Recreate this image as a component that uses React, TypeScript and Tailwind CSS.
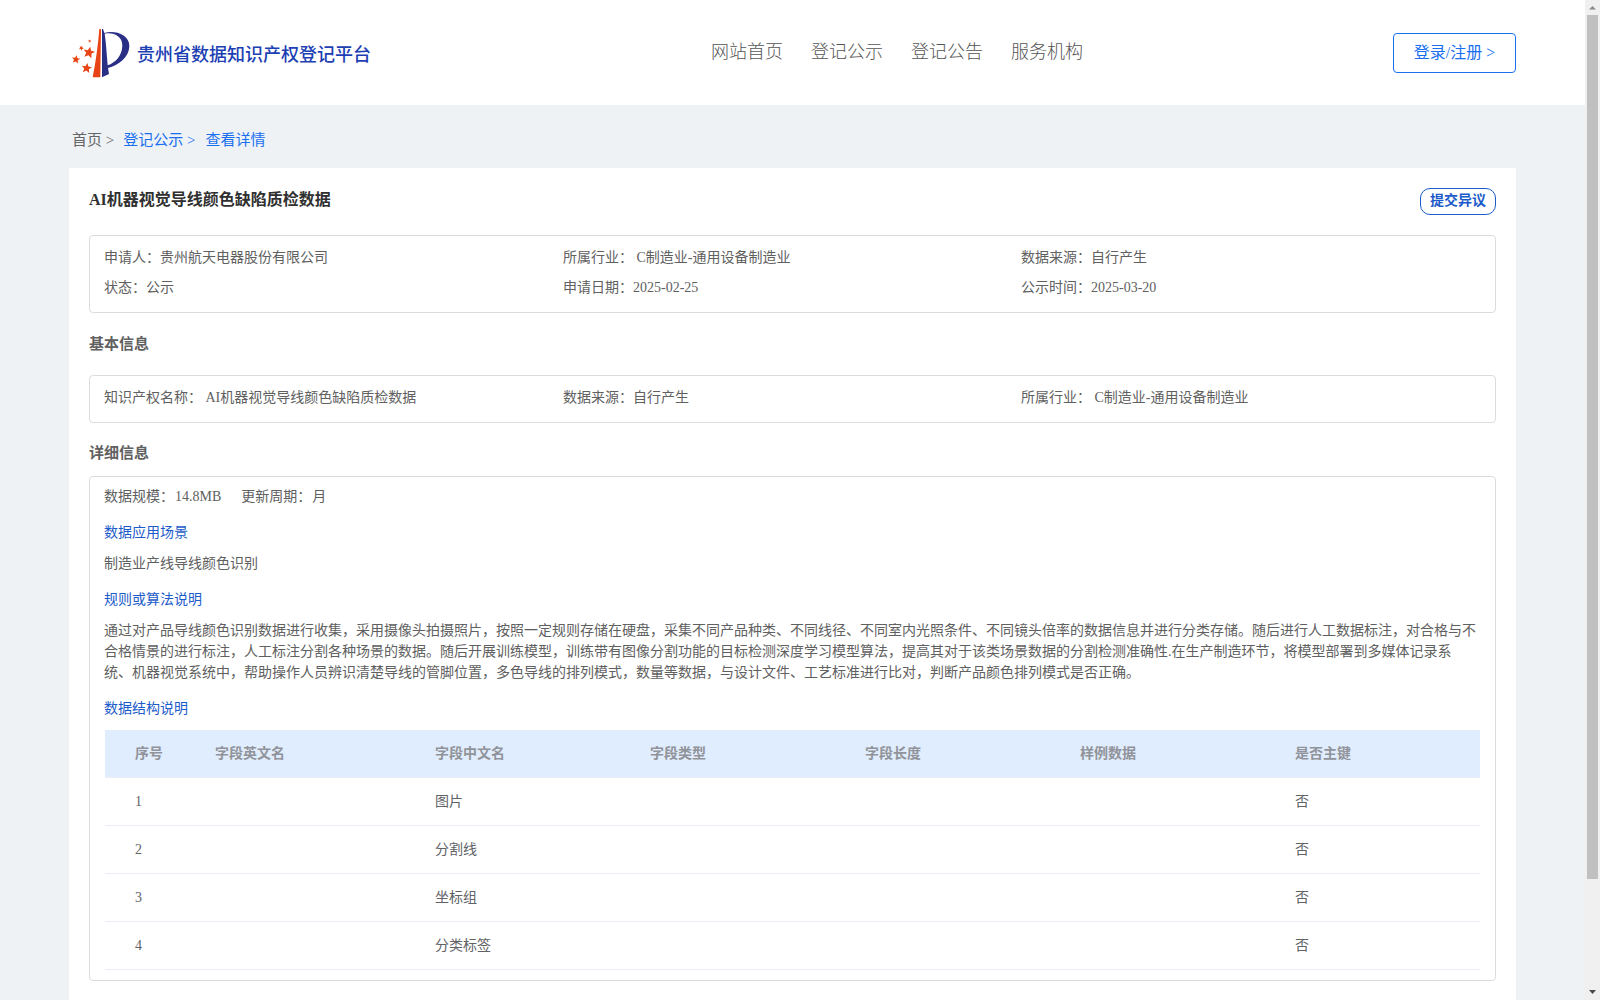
import React from 'react';

interface Field {
  label: string;
  value: string;
}

interface Column {
  title: string;
  key: 'index' | 'nameEn' | 'nameCn' | 'type' | 'length' | 'sample' | 'primary';
}

type Row = Partial<Record<Column['key'], string>>;

const navItems = ['网站首页', '登记公示', '登记公告', '服务机构'];

const summary: Field[] = [
  { label: '申请人：', value: '贵州航天电器股份有限公司' },
  { label: '所属行业：', value: ' C制造业-通用设备制造业' },
  { label: '数据来源：', value: '自行产生' },
  { label: '状态：', value: '公示' },
  { label: '申请日期：', value: '2025-02-25' },
  { label: '公示时间：', value: '2025-03-20' },
];

const basicInfo: Field[] = [
  { label: '知识产权名称：', value: ' AI机器视觉导线颜色缺陷质检数据' },
  { label: '数据来源：', value: '自行产生' },
  { label: '所属行业：', value: ' C制造业-通用设备制造业' },
];

const columns: Column[] = [
  { title: '序号', key: 'index' },
  { title: '字段英文名', key: 'nameEn' },
  { title: '字段中文名', key: 'nameCn' },
  { title: '字段类型', key: 'type' },
  { title: '字段长度', key: 'length' },
  { title: '样例数据', key: 'sample' },
  { title: '是否主键', key: 'primary' },
];

const rows: Row[] = [
  { index: '1', nameCn: '图片', primary: '否' },
  { index: '2', nameCn: '分割线', primary: '否' },
  { index: '3', nameCn: '坐标组', primary: '否' },
  { index: '4', nameCn: '分类标签', primary: '否' },
];

// unit star, centred on the origin
const STAR = 'M0-10L2.9-3.2 10-3 4.5 1.6 6.2 9 0 5-6.2 9-4.5 1.6-10-3-2.9-3.2Z';

const Logo: React.FC = () => (
  <svg className="h-[50px] w-[58px]" viewBox="36 39 174 150">
    <g fill="#e84315">
      <path d="M118 42 C114 92 107 142 98 187 H121 L123 42Z" />
      <path d={STAR} transform="translate(87 112) rotate(12) scale(1.75)" />
      <path d={STAR} transform="translate(80 159) rotate(8) scale(1.55)" />
      <path d={STAR} transform="translate(48 133) rotate(10) scale(1.25)" />
      <path d={STAR} transform="translate(64 99) rotate(30) scale(0.75)" />
      <path d={STAR} transform="translate(89 78) scale(0.5)" />
    </g>
    <path
      fill="#2a2f86"
      d="M126 42L129 42L133 54C162 45 209 57 208 94C207 127 176 151 144 159L147 177L126 187ZM134 56C138 82 140 115 143 151C166 143 186 123 187 93C188 63 160 51 134 56Z"
    />
  </svg>
);

const Header: React.FC = () => (
  <header className="flex h-[105px] items-center justify-between bg-white pr-[69px] pl-[72px]">
    <div className="flex w-[639px] items-center gap-[7px]">
      <Logo />
      <span className="pt-1 text-[18px] leading-6 font-medium text-[#1d3fb4]">贵州省数据知识产权登记平台</span>
    </div>
    <nav className="mr-auto flex gap-7 pb-px text-[18px] leading-6 font-light text-[#555]">
      {navItems.map((item) => (
        <a key={item}>{item}</a>
      ))}
    </nav>
    <button className="h-10 w-[123px] rounded border border-[#1a6ff0] text-base whitespace-nowrap text-[#1a6ff0]">
      登录/注册 &gt;
    </button>
  </header>
);

const Breadcrumb: React.FC = () => (
  <div className="flex h-[63px] items-center pt-[7px] pl-[72px] text-[15px] leading-5 text-[#1a6ff0]">
    <span className="mr-[9px] text-[#666]">首页 &gt;</span>
    <span className="mr-[10px]">登记公示 &gt;</span>
    <span>查看详情</span>
  </div>
);

const FieldBox: React.FC<{ fields: Field[] }> = ({ fields }) => (
  <div className="grid grid-cols-[459px_458px_1fr] rounded border border-[#dcdcdc] pt-[7px] pr-4 pb-[9px] pl-[14px] leading-[30px]">
    {fields.map((field) => (
      <div key={field.label} className="whitespace-pre">
        {field.label}
        {field.value}
      </div>
    ))}
  </div>
);

const SubTitle: React.FC<{ children: React.ReactNode }> = ({ children }) => (
  <h3 className="leading-[21px] text-[#1c5bc9]">{children}</h3>
);

const StructureTable: React.FC = () => (
  <div className="ml-px">
    <div className="grid h-12 grid-cols-[80px_220px_repeat(5,215px)] items-center border-b border-[#ebeef5] bg-[#e0edfe] pb-px font-bold text-[#909399]">
      {columns.map((column) => (
        <div key={column.key} className="pl-[30px]">
          {column.title}
        </div>
      ))}
    </div>
    {rows.map((row) => (
      <div
        key={row.index}
        className="grid h-12 grid-cols-[80px_220px_repeat(5,215px)] items-center border-b border-[#ebeef5] pb-px text-[#606266]"
      >
        {columns.map((column) => (
          <div key={column.key} className="pl-[30px]">
            {row[column.key]}
          </div>
        ))}
      </div>
    ))}
  </div>
);

const Scrollbar: React.FC = () => (
  <div className="flex h-full w-[15px] flex-col items-center bg-[#f0f0f0]">
    <svg className="h-[15px] w-[15px]" viewBox="0 0 15 15">
      <path d="M4 9.5h7L7.5 6z" fill="#8a8a8a" />
    </svg>
    <div className="h-[864px] w-[11px] bg-[#c0c0c0]" />
    <svg className="mt-auto h-[15px] w-[15px]" viewBox="0 0 15 15">
      <path d="M4 5h7L7.5 9z" fill="#4a4a4a" />
    </svg>
  </div>
);

export default function App() {
  return (
    <div className="flex h-[1000px] overflow-hidden bg-[#eef2f5] font-['Liberation_Serif','Noto_Sans_CJK_SC',serif] text-sm text-[#606060] [text-spacing-trim:space-all]">
      <div className="w-[1585px] shrink-0">
        <Header />
        <Breadcrumb />
        <main className="mr-[69px] ml-[69px] h-[900px] bg-white px-5 pt-5">
          <div className="mb-5 flex h-[27px] items-center justify-between">
            <h1 className="pb-1 text-base font-bold text-[#303030]">AI机器视觉导线颜色缺陷质检数据</h1>
            <button className="h-[27px] w-[76px] rounded-[10px] border border-[#1c5bc9] pb-[2px] leading-[23px] font-bold text-[#1c5bc9]">
              提交异议
            </button>
          </div>
          <FieldBox fields={summary} />
          <h2 className="h-[62px] text-[15px] leading-[62px] font-bold">基本信息</h2>
          <FieldBox fields={basicInfo} />
          <h2 className="h-[53px] text-[15px] leading-[61px] font-bold">详细信息</h2>
          <section className="h-[505px] rounded border border-[#dcdcdc] pt-[9px] pr-[15px] pl-[14px] leading-[21px]">
            <div className="flex gap-5">
              <span>数据规模：<span className="ml-px">14.8MB</span></span>
              <span>更新周期：<span className="ml-px">月</span></span>
            </div>
            <div className="mt-[15px]">
              <SubTitle>数据应用场景</SubTitle>
              <p className="mt-[10px]">制造业产线导线颜色识别</p>
            </div>
            <div className="mt-[15px]">
              <SubTitle>规则或算法说明</SubTitle>
              <p className="mt-[10px] pr-[3px]">
                通过对产品导线颜色识别数据进行收集，采用摄像头拍摄照片，按照一定规则存储在硬盘，采集不同产品种类、不同线径、不同室内光照条件、不同镜头倍率的数据信息并进行分类存储。随后进行人工数据标注，对合格与不合格情景的进行标注，人工标注分割各种场景的数据。随后开展训练模型，训练带有图像分割功能的目标检测深度学习模型算法，提高其对于该类场景数据的分割检测准确性.在生产制造环节，将模型部署到多媒体记录系统、机器视觉系统中，帮助操作人员辨识清楚导线的管脚位置，多色导线的排列模式，数量等数据，与设计文件、工艺标准进行比对，判断产品颜色排列模式是否正确。
              </p>
            </div>
            <div className="mt-[15px]">
              <SubTitle>数据结构说明</SubTitle>
              <div className="mt-[11px]">
                <StructureTable />
              </div>
            </div>
          </section>
        </main>
      </div>
      <Scrollbar />
    </div>
  );
}
